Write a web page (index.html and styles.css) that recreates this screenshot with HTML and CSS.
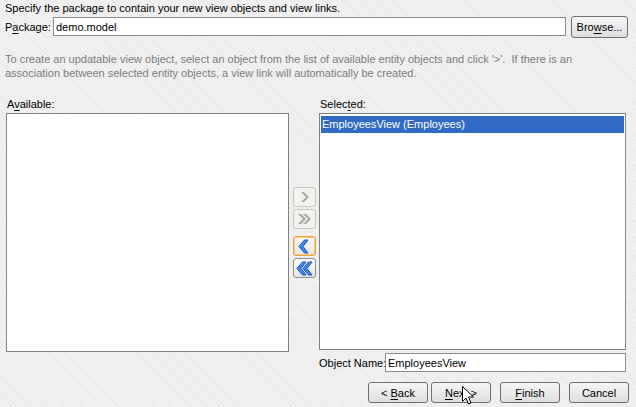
FILE: index.html
```html
<!DOCTYPE html>
<html lang="en">
<head>
    <meta charset="UTF-8">
    <title>Create View Objects</title>
    <link rel="stylesheet" href="styles.css">
</head>
<body>
    <div class="wizard">
        <p class="intro">Specify the package to contain your new view objects and view links.</p>
        <div class="package-row">
            <label for="pkg">P<u>a</u>ckage:</label>
            <input type="text" id="pkg" class="field" value="demo.model">
            <button class="btn browse">Bro<u>w</u>se...</button>
        </div>

        <p class="hint">To create an updatable view object, select an object from the list of available entity objects and click '&gt;'.&nbsp; If there is an association between selected entity objects, a view link will automatically be created.</p>

        <div class="shuttle">
            <div class="col">
                <div class="list-label">A<u>v</u>ailable:</div>
                <div class="list list-left"></div>
            </div>
            <div class="mover">
                <button class="arrow disabled" title="Add">
                    <svg width="11" height="12" viewBox="0 0 11 12"><path d="M2 1 L5 1 L10 6 L5 11 L2 11 L7 6 Z" fill="#a8a8a8"/></svg>
                </button>
                <button class="arrow disabled" title="Add All">
                    <svg width="15" height="12" viewBox="0 0 15 12"><path d="M1 1 L4 1 L9 6 L4 11 L1 11 L6 6 Z M6 1 L9 1 L14 6 L9 11 L6 11 L11 6 Z" fill="#a8a8a8"/></svg>
                </button>
                <button class="arrow focused" title="Remove">
                    <svg width="12" height="15" viewBox="0 0 12 15"><path d="M10 1 L6.5 1 L1 7.5 L6.5 14 L10 14 L5 7.5 Z" fill="#3d8cf0" stroke="#1a4fb8" stroke-width="1"/></svg>
                </button>
                <button class="arrow" title="Remove All">
                    <svg width="17" height="15" viewBox="0 0 17 15"><path d="M10 1 L6.5 1 L1 7.5 L6.5 14 L10 14 L5 7.5 Z M16 1 L12.5 1 L7 7.5 L12.5 14 L16 14 L11 7.5 Z" fill="#3d8cf0" stroke="#1a4fb8" stroke-width="1"/></svg>
                </button>
            </div>
            <div class="col">
                <div class="list-label">Selec<u>t</u>ed:</div>
                <div class="list list-right">
                    <div class="item selected">EmployeesView (Employees)</div>
                </div>
                <div class="name-row">
                    <label for="objname">Ob<u>j</u>ect Name:</label>
                    <input type="text" id="objname" class="field" value="EmployeesView">
                </div>
            </div>
        </div>

        <div class="footer">
            <button class="btn nav">&lt; <u>B</u>ack</button>
            <button class="btn nav next"><u>N</u>ext &gt;</button>
            <button class="btn nav finish"><u>F</u>inish</button>
            <button class="btn nav">Cancel</button>
            <svg class="cursor" width="13" height="20" viewBox="0 0 13 20"><path d="M0.5 0.5 L0.5 15.5 L4 12 L6.5 18 L9 17 L6.5 11 L11.5 11 Z" fill="#fff" stroke="#000" stroke-width="1"/></svg>
        </div>
    </div>
</body>
</html>
```

FILE: styles.css
```css
body {
    margin: 0;
    font-family: "Liberation Sans", Arial, sans-serif;
    font-size: 11px;
    color: #000;
    background-color: #efefef;
    background-image: repeating-linear-gradient(45deg, #e9e9e9 0 1px, #f2f2f2 1px 3px);
}
u {
    text-decoration-thickness: 1px;
    text-underline-offset: 2px;
}
.wizard {
    width: 636px;
    height: 407px;
}
.intro {
    margin: 0;
    padding: 2px 0 0 5px;
    line-height: 13px;
}
.package-row {
    display: flex;
    align-items: center;
    padding: 0 8px 0 5px;
    height: 23px;
}
.package-row label {
    width: 48px;
    white-space: nowrap;
}
.field {
    font: inherit;
    height: 19px;
    box-sizing: border-box;
    border: 1px solid #8c8c8c;
    background: #fff;
    padding: 0 2px;
    margin: 0;
}
.package-row .field {
    flex: 1;
}
.btn {
    font: inherit;
    color: #000;
    height: 22px;
    box-sizing: border-box;
    border: 1px solid #707070;
    border-radius: 3px;
    background: linear-gradient(#f6f6f6, #dedede);
    padding: 0;
    margin: 0;
}
.browse {
    width: 57px;
    margin-left: 5px;
}
.hint {
    margin: 14px 0 0 0;
    padding: 0 50px 0 5px;
    line-height: 14px;
    color: #7d7d7d;
}
.shuttle {
    display: flex;
    padding: 18px 10px 0 6px;
}
.col {
    display: flex;
    flex-direction: column;
}
.list-label {
    height: 13px;
    line-height: 12px;
    padding-left: 1px;
}
.list {
    margin-top: 2px;
    box-sizing: border-box;
    border: 1px solid #828282;
    background: #fff;
}
.list-left {
    width: 283px;
    height: 239px;
}
.list-right {
    width: 307px;
    height: 237px;
    padding: 2px 1px;
}
.item {
    height: 17px;
    line-height: 17px;
    padding-left: 1px;
}
.item.selected {
    background: #316ac5;
    color: #fff;
}
.mover {
    width: 30px;
    display: flex;
    flex-direction: column;
    align-items: center;
    padding-top: 89px;
    gap: 2px;
}
.arrow {
    width: 23px;
    height: 20px;
    box-sizing: border-box;
    border: 1px solid #8e8f8f;
    border-radius: 3px;
    background: linear-gradient(#fbfbfb, #e4e4e4);
    padding: 0;
    display: flex;
    align-items: center;
    justify-content: center;
}
.arrow.disabled {
    border-color: #c8c8bd;
    background: #f2f2ee;
}
.arrow.focused {
    margin-top: 5px;
    border-color: #e8a23c;
    box-shadow: inset 0 0 0 1px #f8cc7c;
}
.name-row {
    display: flex;
    align-items: center;
    margin-top: 3px;
}
.name-row label {
    width: 66px;
    flex-shrink: 0;
    white-space: nowrap;
}
.name-row .field {
    flex: 1;
    min-width: 0;
}
.footer {
    position: relative;
    display: flex;
    justify-content: flex-end;
    padding: 10px 7px 0 0;
}
.nav {
    width: 60px;
    height: 21px;
    margin-left: 9px;
}
.next {
    margin-left: 3px;
}
.cursor {
    position: absolute;
    left: 462px;
    top: 14px;
}
```
